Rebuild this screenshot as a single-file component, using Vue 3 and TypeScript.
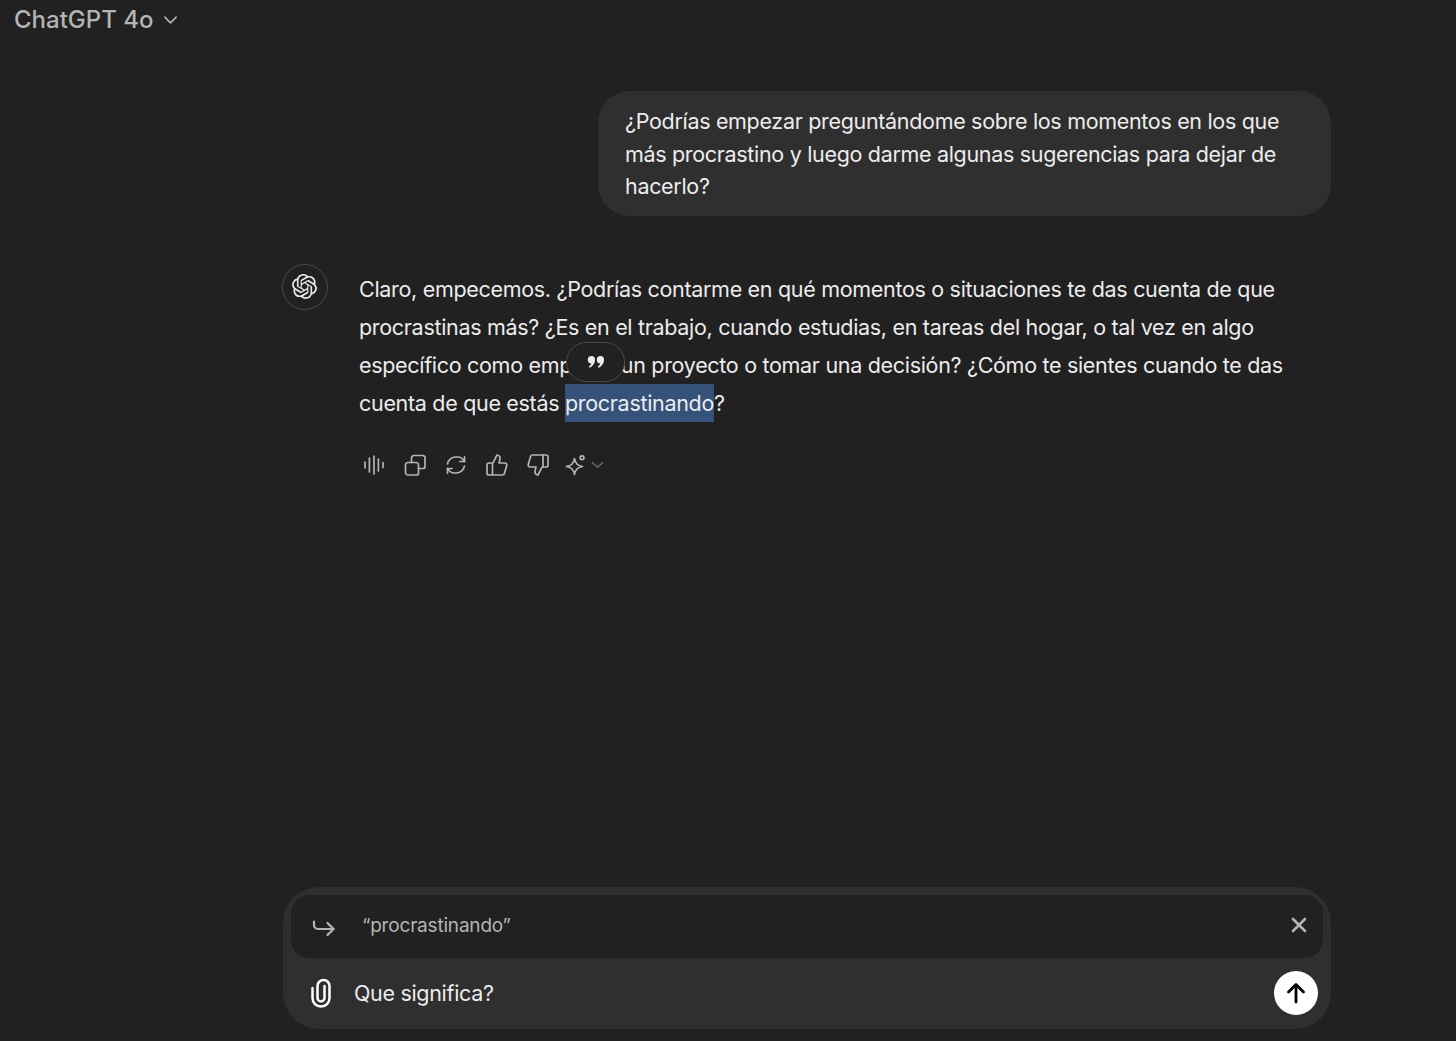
<template>
  <div class="page">
    <header class="topbar">
      <span class="model-name">ChatGPT 4o</span>
      <svg class="model-chevron" viewBox="0 0 16 10" fill="none" stroke="currentColor" stroke-width="1.7" stroke-linecap="round" stroke-linejoin="round">
        <path d="M2 2l6 6 6-6" />
      </svg>
    </header>

    <main class="thread">
      <div class="user-row">
        <div class="user-bubble">{{ userText }}</div>
      </div>

      <div class="reply-row">
        <div class="avatar">
          <svg class="avatar-logo" viewBox="0 0 24 24" fill="currentColor" width="25" height="25">
            <path :d="logoPath" />
          </svg>
        </div>
        <div class="reply-body">
          <p class="reply-text">{{ replyBefore }}<span class="selected">procrastinando</span>?<button class="quote-pop" type="button" aria-label="Citar">
              <svg viewBox="0 0 18 14" width="18" height="14" fill="currentColor">
                <path d="M4.400 1a3.600 3.600 0 0 1 3.600 3.700c0 3.400-2.300 6.600-5.400 8l-.8-1.200c1.200-.8 2.100-1.800 2.600-3A3.400 3.400 0 0 1 .8 4.600 3.600 3.600 0 0 1 4.400 1Z" />
                <path d="M13.400 1A3.600 3.600 0 0 1 17 4.700c0 3.400-2.300 6.600-5.400 8l-.8-1.200c1.200-.8 2.100-1.800 2.600-3a3.400 3.400 0 0 1-3.600-3.900A3.600 3.600 0 0 1 13.400 1Z" />
              </svg>
            </button></p>

          <div class="actions">
            <button v-for="icon in actionIcons" :key="icon.name" class="action" type="button" :aria-label="icon.name">
              <svg viewBox="0 0 24 24" width="24" height="24" fill="none" stroke="currentColor" stroke-width="1.7" stroke-linecap="round" stroke-linejoin="round">
                <path v-for="d in icon.paths" :key="d" :d="d" />
              </svg>
            </button>
            <button class="action action-model" type="button" aria-label="Cambiar modelo">
              <svg viewBox="0 0 24 24" width="24" height="24" fill="none" stroke="currentColor" stroke-width="1.7" stroke-linecap="round" stroke-linejoin="round">
                <path d="M10.500 5.500c.7 5 3 7.300 8 8-5 .7-7.300 3-8 8-.7-5-3-7.300-8-8 5-.7 7.300-3 8-8Z" />
                <circle cx="18" cy="4.800" r="1.900" />
              </svg>
              <svg class="action-chevron" viewBox="0 0 14 8" width="13" height="8" fill="none" stroke="currentColor" stroke-width="1.300" stroke-linecap="round" stroke-linejoin="round">
                <path d="M1.500 1.500 7 6.500l5.500-5" />
              </svg>
            </button>
          </div>
        </div>
      </div>
    </main>

    <footer class="composer">
      <div class="quoted">
        <svg class="quoted-arrow" viewBox="0 0 24 20" width="24" height="20" fill="none" stroke="currentColor" stroke-width="2.200" stroke-linecap="round" stroke-linejoin="round">
          <path d="M2 2.500v3.500a4 4 0 0 0 4 4h15.500" />
          <path d="M15.500 4l6 6-6 6" />
        </svg>
        <span class="quoted-text">“procrastinando”</span>
        <svg class="quoted-close" viewBox="0 0 16 16" width="16" height="16" fill="none" stroke="currentColor" stroke-width="2.600" stroke-linecap="round">
          <path d="M2 2l12 12M14 2 2 14" />
        </svg>
      </div>
      <div class="input-row">
        <svg class="clip" viewBox="0 0 22 30" width="22" height="30" fill="none" stroke="currentColor" stroke-width="2.500" stroke-linecap="round" stroke-linejoin="round">
          <path d="M2.500 10v10a8.500 8.500 0 0 0 17 0V8a6 6 0 0 0-12 0v12a3.500 3.500 0 0 0 7 0V8" />
        </svg>
        <span class="input-text">Que significa?</span>
        <button class="send" type="button" aria-label="Enviar">
          <svg viewBox="0 0 24 24" width="24" height="24" fill="none" stroke="currentColor" stroke-width="2.800" stroke-linecap="round" stroke-linejoin="round">
            <path d="M12 21V4M4.500 11 12 3.500 19.500 11" />
          </svg>
        </button>
      </div>
    </footer>
  </div>
</template>

<script setup lang="ts">
interface ActionIcon {
  name: string
  paths: string[]
}

const userText =
  '¿Podrías empezar preguntándome sobre los momentos en los que más procrastino y luego darme algunas sugerencias para dejar de hacerlo?'

const replyBefore =
  'Claro, empecemos. ¿Podrías contarme en qué momentos o situaciones te das cuenta de que procrastinas más? ¿Es en el trabajo, cuando estudias, en tareas del hogar, o tal vez en algo específico como empezar un proyecto o tomar una decisión? ¿Cómo te sientes cuando te das cuenta de que estás '

const logoPath =
  'M22.2819 9.8211a5.9847 5.9847 0 0 0-.5157-4.9108 6.0462 6.0462 0 0 0-6.5098-2.9A6.0651 6.0651 0 0 0 4.9807 4.1818a5.9847 5.9847 0 0 0-3.9977 2.9 6.0462 6.0462 0 0 0 .7427 7.0966 5.98 5.98 0 0 0 .511 4.9107 6.051 6.051 0 0 0 6.5146 2.9001A5.9847 5.9847 0 0 0 13.2599 24a6.0557 6.0557 0 0 0 5.7718-4.2058 5.9894 5.9894 0 0 0 3.9977-2.9001 6.0557 6.0557 0 0 0-.7475-7.0729zm-9.022 12.6081a4.4755 4.4755 0 0 1-2.8764-1.0408l.1419-.0804 4.7783-2.7582a.7948.7948 0 0 0 .3927-.6813v-6.7369l2.02 1.1686a.071.071 0 0 1 .038.052v5.5826a4.504 4.504 0 0 1-4.4945 4.4944zm-9.6607-4.1254a4.4708 4.4708 0 0 1-.5346-3.0137l.142.0852 4.783 2.7582a.7712.7712 0 0 0 .7806 0l5.8428-3.3685v2.3324a.0804.0804 0 0 1-.0332.0615L9.74 19.9502a4.4992 4.4992 0 0 1-6.1408-1.6464zM2.3408 7.8956a4.485 4.485 0 0 1 2.3655-1.9728V11.6a.7664.7664 0 0 0 .3879.6765l5.8144 3.3543-2.0201 1.1685a.0757.0757 0 0 1-.071 0l-4.8303-2.7865A4.504 4.504 0 0 1 2.3408 7.872zm16.5963 3.8558L13.1038 8.364 15.1192 7.2a.0757.0757 0 0 1 .071 0l4.8303 2.7913a4.4944 4.4944 0 0 1-.6765 8.1042v-5.6772a.79.79 0 0 0-.407-.667zm2.0107-3.0231l-.142-.0852-4.7735-2.7818a.7759.7759 0 0 0-.7854 0L9.409 9.2297V6.8974a.0662.0662 0 0 1 .0284-.0615l4.8303-2.7866a4.4992 4.4992 0 0 1 6.6802 4.66zM8.3065 12.863l-2.02-1.1638a.0804.0804 0 0 1-.038-.0567V6.0742a4.4992 4.4992 0 0 1 7.3757-3.4537l-.142.0805L8.704 5.459a.7948.7948 0 0 0-.3927.6813zm1.0976-2.3654l2.602-1.4998 2.6069 1.4998v2.9994l-2.5974 1.4997-2.6067-1.4997Z'

const actionIcons: ActionIcon[] = [
  {
    name: 'Leer en voz alta',
    paths: ['M3 9v6', 'M7.400 5v14', 'M12 3v18', 'M16.400 6v12', 'M21 9.500v5'],
  },
  {
    name: 'Copiar',
    paths: [
      'M5 9.500h8a2.500 2.500 0 0 1 2.500 2.500v8a2 2 0 0 1-2 2H5a2.500 2.500 0 0 1-2.500-2.500V12A2.500 2.500 0 0 1 5 9.500Z',
      'M8.500 9.500V5A2.500 2.500 0 0 1 11 2.500h8.500A2.500 2.500 0 0 1 22 5v8.500a2 2 0 0 1-2 2h-4.500',
    ],
  },
  {
    name: 'Regenerar',
    paths: [
      'M3.500 11a8.500 8.500 0 0 1 8.500-7h2.500a6 6 0 0 1 4 2L20.500 8.500',
      'M20.500 3.800v4.700h-4.700',
      'M20.500 13a8.500 8.500 0 0 1-8.500 7H9.500a6 6 0 0 1-4-2L3.500 15.500',
      'M3.500 20.200v-4.700h4.700',
    ],
  },
  {
    name: 'Me gusta',
    paths: [
      'M7.500 10.500V21.500',
      'M15 5.880 14 10h5.830a2 2 0 0 1 1.920 2.560l-2.330 8A2 2 0 0 1 17.500 22H4a2 2 0 0 1-2-2v-8a2 2 0 0 1 2-2h2.760a2 2 0 0 0 1.790-1.110L12 2a3.130 3.130 0 0 1 3 3.880Z',
    ],
  },
  {
    name: 'No me gusta',
    paths: [
      'M17 14V2',
      'M9 18.120 10 14H4.170a2 2 0 0 1-1.920-2.560l2.330-8A2 2 0 0 1 6.500 2H20a2 2 0 0 1 2 2v8a2 2 0 0 1-2 2h-2.760a2 2 0 0 0-1.790 1.110L12 22a3.130 3.130 0 0 1-3-3.880Z',
    ],
  },
]
</script>

<style>
html,
body {
  margin: 0;
  background: #212121;
}
</style>

<style scoped>
.page {
  display: flex;
  flex-direction: column;
  height: 1041px;
  background: #212121;
  color: #ececec;
  font-family: Inter, 'Liberation Sans', sans-serif;
  overflow: hidden;
}

.topbar {
  display: flex;
  align-items: center;
  gap: 9px;
  height: 40px;
  padding-left: 14px;
  color: #b4b4b4;
}

.model-name {
  font-size: 24px;
  font-weight: 500;
  line-height: 40px;
}

.model-chevron {
  width: 15px;
  height: 10px;
}

.thread {
  flex: 1;
  padding: 51px 125px 0 282px;
}

.user-row {
  display: flex;
  justify-content: flex-end;
}

.user-bubble {
  box-sizing: border-box;
  width: 733px;
  height: 125px;
  padding: 14px 27px 0;
  border-radius: 32px;
  background: #2f2f2f;
  font-size: 21.5px;
  letter-spacing: -0.32px;
  line-height: 32.7px;
}

.reply-row {
  display: flex;
  margin-top: 48px;
}

.avatar {
  display: flex;
  flex: none;
  align-items: center;
  justify-content: center;
  box-sizing: border-box;
  width: 46px;
  height: 46px;
  border: 1px solid #4a4a4a;
  border-radius: 50%;
  color: #ececec;
}

.avatar-logo {
  margin: -1px 1px 0 0;
}

.reply-body {
  margin-left: 31px;
  flex: 1;
}

.reply-text {
  position: relative;
  margin: 6px 0 0;
  font-size: 21.5px;
  letter-spacing: -0.31px;
  line-height: 38px;
}

.selected {
  display: inline-block;
  background: #34527a;
}

.quote-pop {
  position: absolute;
  left: 207px;
  top: 72px;
  display: flex;
  align-items: center;
  justify-content: center;
  box-sizing: border-box;
  width: 59px;
  height: 40px;
  padding: 0 0 1px;
  border: 1px solid #4a4a4a;
  border-radius: 20px;
  background: #212121;
  color: #ececec;
}

.actions {
  display: flex;
  align-items: center;
  gap: 11px;
  margin-top: 28px;
}

.action {
  display: flex;
  align-items: center;
  justify-content: center;
  width: 30px;
  height: 30px;
  padding: 0;
  border: 0;
  background: none;
  color: #b4b4b4;
}

.action-model {
  gap: 3px;
  width: auto;
}

.action-chevron {
  color: #6f6f6f;
}

.composer {
  box-sizing: border-box;
  height: 142px;
  margin: 0 125px 12px 283px;
  padding: 8px;
  border-radius: 36px;
  background: #2f2f2f;
}

.quoted {
  display: flex;
  align-items: center;
  height: 63px;
  padding: 0 16px 2px 21px;
  box-sizing: border-box;
  border-radius: 18px;
  background: #212121;
  color: #b4b4b4;
}

.quoted-arrow {
  flex: none;
  margin-top: 6px;
}

.quoted-text {
  flex: 1;
  margin-left: 26px;
  font-size: 19px;
  letter-spacing: -0.19px;
}

.quoted-close {
  margin-top: -1px;
}

.input-row {
  display: flex;
  align-items: center;
  height: 69px;
  padding: 0 5px 0 19px;
}

.clip {
  flex: none;
  color: #fff;
}

.input-text {
  flex: 1;
  margin-left: 22px;
  font-size: 21.5px;
  letter-spacing: -0.32px;
}

.send {
  display: flex;
  align-items: center;
  justify-content: center;
  width: 44px;
  height: 44px;
  padding: 0;
  border: 0;
  border-radius: 50%;
  background: #fff;
  color: #000;
}
</style>
